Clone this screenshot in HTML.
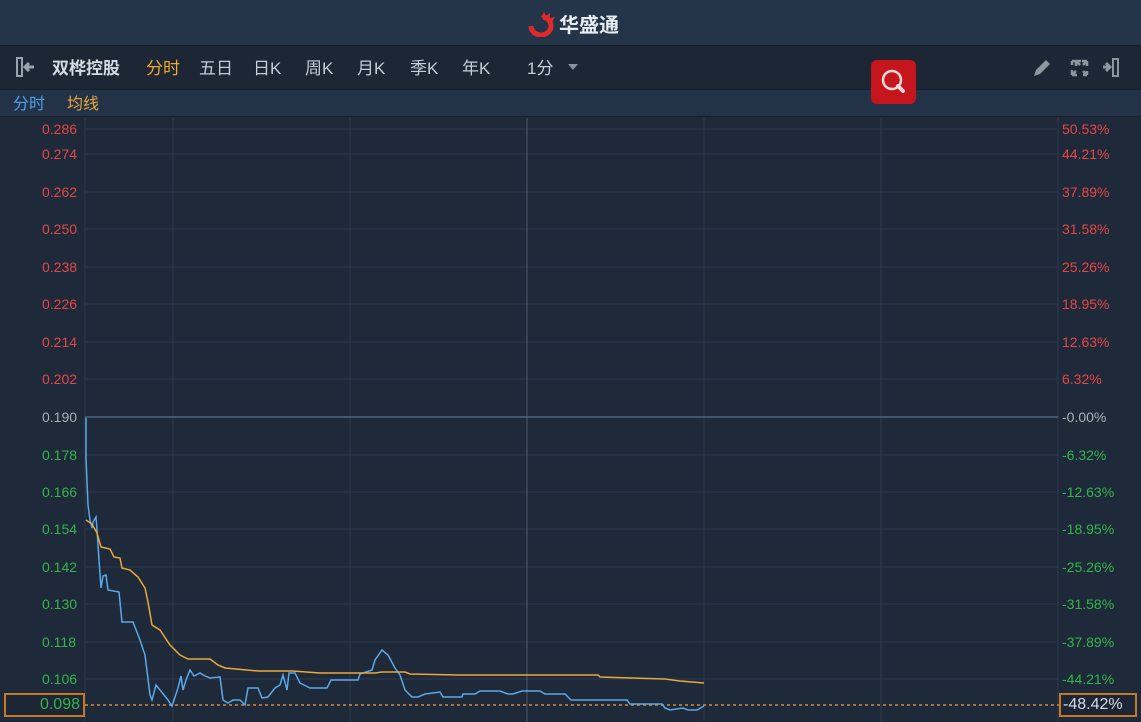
<!DOCTYPE html>
<html><head><meta charset="utf-8"><style>
*{margin:0;padding:0;box-sizing:border-box}
body{width:1141px;height:722px;overflow:hidden;background:#1e2939;font-family:"Liberation Sans","Noto Sans CJK SC",sans-serif;position:relative}
.top{position:absolute;left:0;top:0;width:1141px;height:45px;background:#243449}
.tb{position:absolute;left:0;top:45px;width:1141px;height:44px;background:#1c2635;border-top:1px solid #131b26}
.lg{position:absolute;left:0;top:89px;width:1141px;height:28px;background:#233247;border-top:1px solid #162030;border-bottom:1px solid #162030}
.t{position:absolute;font-size:17px;color:#c5ccd6;top:54px}
.lab{position:absolute;font-size:14px;font-family:"Liberation Sans",sans-serif}
</style></head><body>
<div class="top"></div>
<div style="position:absolute;left:527px;top:9px;font-size:20px;font-weight:bold;color:#e8ecf0">
<svg width="30" height="26" viewBox="0 0 30 26" style="vertical-align:middle;margin-right:2px"><path d="M4 15a10 9 0 1 0 20 0a10 9 0 0 0-8-9" fill="none" stroke="#e02a2a" stroke-width="5"/><path d="M14 6l3-5 2 4 4-3 0 5 5-1-3 5" fill="#e02a2a"/><path d="M10 19l4-5 3 3" stroke="#243449" stroke-width="2" fill="none"/></svg><span style="vertical-align:middle">华盛通</span></div>
<div class="tb"></div>
<div class="lg"></div>
<svg style="position:absolute;left:15px;top:57px" width="26" height="20"><rect x="2" y="1" width="5" height="18" fill="none" stroke="#9aa3ad" stroke-width="2"/><path d="M11 10h8M14 6l-4 4 4 4" stroke="#9aa3ad" stroke-width="3" fill="none"/></svg>
<div class="t" style="left:52px;font-weight:bold;color:#d5dbe3">双桦控股</div>
<div class="t" style="left:146px;color:#f0a830">分时</div>
<div class="t" style="left:199px">五日</div>
<div class="t" style="left:253px">日K</div>
<div class="t" style="left:305px">周K</div>
<div class="t" style="left:357px">月K</div>
<div class="t" style="left:410px">季K</div>
<div class="t" style="left:462px">年K</div>
<div class="t" style="left:527px">1分</div>
<div style="position:absolute;left:568px;top:64px;border:5px solid transparent;border-top:6px solid #8a939e"></div>
<svg style="position:absolute;left:1030px;top:56px" width="100" height="24"><path d="M4 20l2-6 10-10 4 4-10 10z" fill="#8d959f"/><path d="M46 5h5M46 5v5M46 5l4 4M42 19h5M42 19v-5M42 19l4-4M57 5v5M57 5h-5M57 5l-4 4M57 19h-4M57 19v-4M57 19l-4-4M42 5h4M42 5v4" stroke="#8d959f" stroke-width="2.5" fill="none"/><path d="M73 11h6M76 7l4 4-4 4" stroke="#8d959f" stroke-width="3" fill="none"/><rect x="83" y="3" width="5" height="17" fill="none" stroke="#8d959f" stroke-width="2"/></svg>
<div style="position:absolute;left:13px;top:90px;font-size:16px;color:#4aa3e8">分时</div>
<div style="position:absolute;left:67px;top:90px;font-size:16px;color:#e8a83a">均线</div>
<svg style="position:absolute;left:0;top:118px" width="1141" height="604">
<g stroke="#2d3b4e" stroke-width="1">
<line x1="85" y1="11" x2="1058" y2="11"/><line x1="85" y1="36" x2="1058" y2="36"/><line x1="85" y1="74" x2="1058" y2="74"/><line x1="85" y1="111" x2="1058" y2="111"/><line x1="85" y1="149" x2="1058" y2="149"/><line x1="85" y1="186" x2="1058" y2="186"/><line x1="85" y1="224" x2="1058" y2="224"/><line x1="85" y1="261" x2="1058" y2="261"/><line x1="85" y1="337" x2="1058" y2="337"/><line x1="85" y1="374" x2="1058" y2="374"/><line x1="85" y1="411" x2="1058" y2="411"/><line x1="85" y1="449" x2="1058" y2="449"/><line x1="85" y1="486" x2="1058" y2="486"/><line x1="85" y1="524" x2="1058" y2="524"/><line x1="85" y1="561" x2="1058" y2="561"/>
<line x1="85" y1="0" x2="85" y2="604"/><line x1="173" y1="0" x2="173" y2="604"/><line x1="350" y1="0" x2="350" y2="604"/><line x1="704" y1="0" x2="704" y2="604"/><line x1="881" y1="0" x2="881" y2="604"/><line x1="1058" y1="0" x2="1058" y2="604"/>
</g>
<line x1="527" y1="0" x2="527" y2="604" stroke="#4a5a70"/>
<line x1="85" y1="299" x2="1058" y2="299" stroke="#4d6580" stroke-width="1.5"/>
<line x1="85" y1="587" x2="1060" y2="587" stroke="#d68a3a" stroke-dasharray="3,3" stroke-width="1.5"/>
<g transform="translate(0,-118)" fill="none" stroke-width="1.5">
<polyline stroke="#5aa8e8" points="86,418 86,458 88,505 90,520 92,528 93,522 96,517 97,530 99,560 101,588 103,576 106,575 108,590 119,592 122,622 133,622 140,640 145,655 150,695 152,700 156,685 160,690 168,700 172,706 178,688 181,676 183,690 186,680 190,670 194,676 200,673 205,676 210,678 220,677 223,700 228,703 233,700 240,700 245,705 248,688 258,688 262,698 268,697 275,688 280,685 283,675 287,690 289,673 295,673 300,683 310,688 327,688 331,680 348,680 358,680 360,674 372,670 375,660 382,650 388,655 395,668 400,675 405,690 412,697 418,697 425,694 440,692 443,697 462,697 463,694 475,694 480,691 500,691 508,694 513,694 522,691 540,691 545,694 565,694 571,700 627,700 630,704 662,704 665,708 670,710 683,708 688,710 697,710 704,706"/>
<polyline stroke="#e8a83a" points="86,520 92,524 97,533 101,547 110,549 114,557 120,558 122,568 130,570 138,577 145,588 148,602 152,625 160,630 170,645 180,655 188,659 210,659 218,665 225,668 258,671 293,671 320,673 375,673 382,672 405,672 410,674 458,675 598,675 600,677 665,679 680,681 704,683"/>
</g>
</svg>
<div style="position:absolute;left:871px;top:60px;width:45px;height:44px;background:#c4161c;border-radius:6px"><svg width="45" height="44"><circle cx="21" cy="20" r="9" fill="none" stroke="#f2d8d8" stroke-width="2.5"/><path d="M27 26l5 5" stroke="#f2d8d8" stroke-width="4" stroke-linecap="round"/></svg></div>
<div class="lab" style="left:42px;top:121px;color:#e84545">0.286</div>
<div class="lab" style="left:42px;top:146px;color:#e84545">0.274</div>
<div class="lab" style="left:42px;top:184px;color:#e84545">0.262</div>
<div class="lab" style="left:42px;top:221px;color:#e84545">0.250</div>
<div class="lab" style="left:42px;top:259px;color:#e84545">0.238</div>
<div class="lab" style="left:42px;top:296px;color:#e84545">0.226</div>
<div class="lab" style="left:42px;top:334px;color:#e84545">0.214</div>
<div class="lab" style="left:42px;top:371px;color:#e84545">0.202</div>
<div class="lab" style="left:42px;top:409px;color:#a8b0ba">0.190</div>
<div class="lab" style="left:42px;top:447px;color:#33b54a">0.178</div>
<div class="lab" style="left:42px;top:484px;color:#33b54a">0.166</div>
<div class="lab" style="left:42px;top:521px;color:#33b54a">0.154</div>
<div class="lab" style="left:42px;top:559px;color:#33b54a">0.142</div>
<div class="lab" style="left:42px;top:596px;color:#33b54a">0.130</div>
<div class="lab" style="left:42px;top:634px;color:#33b54a">0.118</div>
<div class="lab" style="left:42px;top:671px;color:#33b54a">0.106</div>
<div style="position:absolute;left:4px;top:693px;width:81px;height:24px;border:2px solid #c07a2a;background:#1c2635;color:#33b54a;font-size:16px;text-align:right;padding-right:3px;line-height:20px">0.098</div>
<div class="lab" style="left:1062px;top:121px;color:#e84545">50.53%</div>
<div class="lab" style="left:1062px;top:146px;color:#e84545">44.21%</div>
<div class="lab" style="left:1062px;top:184px;color:#e84545">37.89%</div>
<div class="lab" style="left:1062px;top:221px;color:#e84545">31.58%</div>
<div class="lab" style="left:1062px;top:259px;color:#e84545">25.26%</div>
<div class="lab" style="left:1062px;top:296px;color:#e84545">18.95%</div>
<div class="lab" style="left:1062px;top:334px;color:#e84545">12.63%</div>
<div class="lab" style="left:1062px;top:371px;color:#e84545">6.32%</div>
<div class="lab" style="left:1062px;top:409px;color:#a8b0ba">-0.00%</div>
<div class="lab" style="left:1062px;top:447px;color:#33b54a">-6.32%</div>
<div class="lab" style="left:1062px;top:484px;color:#33b54a">-12.63%</div>
<div class="lab" style="left:1062px;top:521px;color:#33b54a">-18.95%</div>
<div class="lab" style="left:1062px;top:559px;color:#33b54a">-25.26%</div>
<div class="lab" style="left:1062px;top:596px;color:#33b54a">-31.58%</div>
<div class="lab" style="left:1062px;top:634px;color:#33b54a">-37.89%</div>
<div class="lab" style="left:1062px;top:671px;color:#33b54a">-44.21%</div>
<div style="position:absolute;left:1059px;top:693px;width:78px;height:24px;border:2px solid #c07a2a;background:#1c2635;color:#d5dbe3;font-size:16px;padding-left:2px;line-height:20px">-48.42%</div>
</body></html>
